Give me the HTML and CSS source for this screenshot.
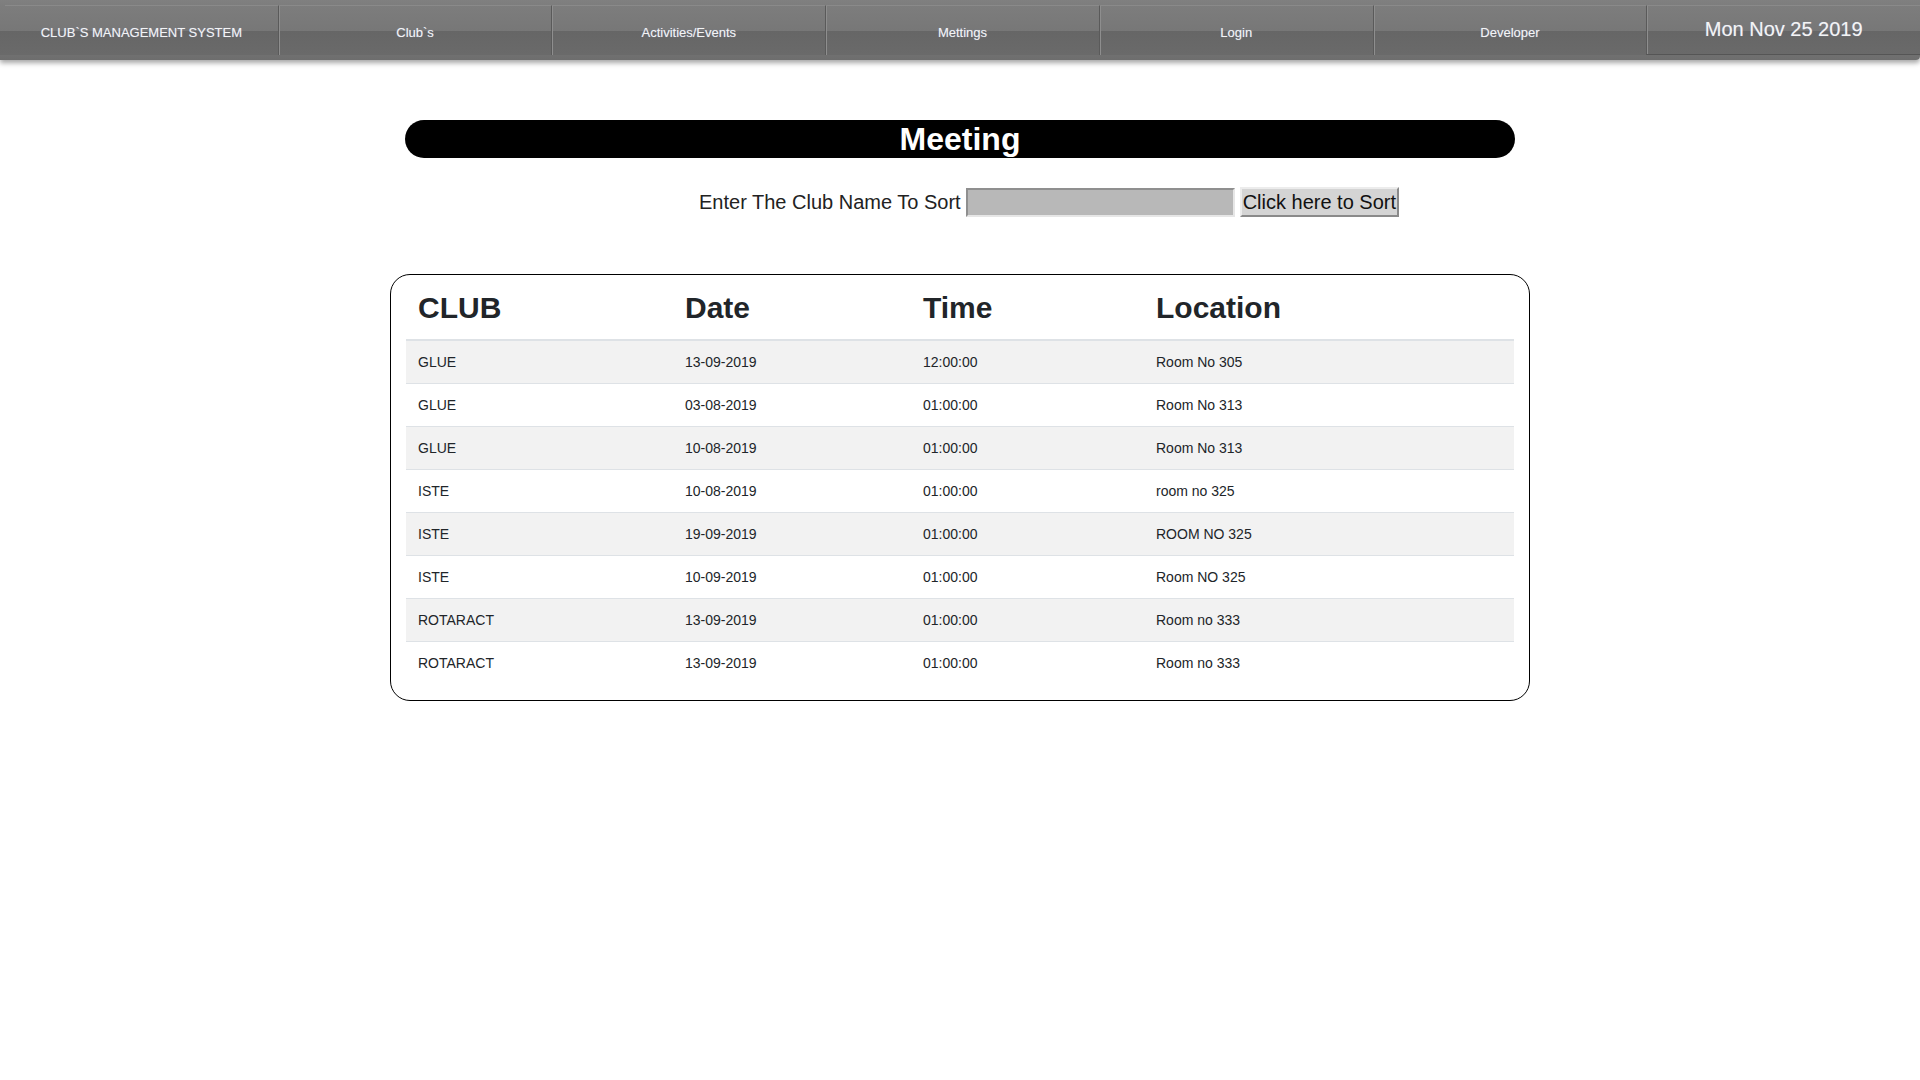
FILE: index.html
```html
<!DOCTYPE html>
<html lang="en">
<head>
<meta charset="utf-8">
<title>Meeting</title>
<link rel="stylesheet" href="styles.css">
</head>
<body>
<nav class="topbar">
  <ul class="menu">
    <li class="menu-item first">CLUB`S MANAGEMENT SYSTEM</li>
    <li class="menu-item">Club`s</li>
    <li class="menu-item">Activities/Events</li>
    <li class="menu-item">Mettings</li>
    <li class="menu-item">Login</li>
    <li class="menu-item">Developer</li>
    <li class="menu-item date">Mon Nov 25 2019</li>
  </ul>
</nav>
<main class="page">
  <div class="wrap">
    <h1 class="title">Meeting</h1>
    <form class="sort">
      <label class="sort-label">Enter The Club Name To Sort</label>
      <input class="sort-input" type="text">
      <button class="sort-btn" type="button">Click here to Sort</button>
    </form>
  </div>
  <div class="card">
    <table class="meetings">
      <colgroup>
        <col class="c1"><col class="c2"><col class="c3"><col class="c4">
      </colgroup>
      <thead>
        <tr><th>CLUB</th><th>Date</th><th>Time</th><th>Location</th></tr>
      </thead>
      <tbody>
        <tr><td>GLUE</td><td>13-09-2019</td><td>12:00:00</td><td>Room No 305</td></tr>
        <tr><td>GLUE</td><td>03-08-2019</td><td>01:00:00</td><td>Room No 313</td></tr>
        <tr><td>GLUE</td><td>10-08-2019</td><td>01:00:00</td><td>Room No 313</td></tr>
        <tr><td>ISTE</td><td>10-08-2019</td><td>01:00:00</td><td>room no 325</td></tr>
        <tr><td>ISTE</td><td>19-09-2019</td><td>01:00:00</td><td>ROOM NO 325</td></tr>
        <tr><td>ISTE</td><td>10-09-2019</td><td>01:00:00</td><td>Room NO 325</td></tr>
        <tr><td>ROTARACT</td><td>13-09-2019</td><td>01:00:00</td><td>Room no 333</td></tr>
        <tr><td>ROTARACT</td><td>13-09-2019</td><td>01:00:00</td><td>Room no 333</td></tr>
      </tbody>
    </table>
  </div>
</main>
</body>
</html>
```
FILE: styles.css
```css
body {
  margin: 0;
  font-family: "Liberation Sans", Arial, sans-serif;
  color: #212529;
  background: #fff;
}

.topbar {
  height: 60px;
  background: linear-gradient(to bottom, #808080 0, #7d7d7d 5px, #777 31px, #666 31px, #6a6a6a 55px, #707070 55px, #6e6e6e 60px);
  box-shadow: 0 3px 5px rgba(0, 0, 0, 0.35);
  border-bottom-right-radius: 4px;
}

.menu {
  display: flex;
  margin: 0;
  padding: 5px 0 0 5px;
  list-style: none;
  height: 50px;
}

.menu-item {
  flex: 1;
  display: flex;
  align-items: center;
  justify-content: center;
  box-sizing: border-box;
  padding-top: 4px;
  font-size: 13px;
  color: #f4f4f4;
  text-shadow: 0 0 1px rgba(180, 200, 255, 0.5);
  border-top: 1px solid #8a8a8a;
  border-left: 1px solid #5a5a5a;
  box-shadow: inset 1px 0 0 #8e8e8e;
}

.menu-item.first {
  border-left: none;
  box-shadow: none;
}

.menu-item.date {
  font-size: 20px;
  padding-top: 0;
  padding-bottom: 2px;
  border-bottom: 1px solid #555;
}

.wrap {
  width: 1110px;
  margin: 60px auto 0;
}

.title {
  margin: 0;
  height: 38px;
  line-height: 38px;
  background: #000;
  color: #fff;
  border-radius: 19px;
  text-align: center;
  font-size: 32px;
  font-weight: bold;
}

.sort {
  display: flex;
  align-items: center;
  margin: 29px 0 0;
  padding-left: 294px;
  height: 30px;
}

.sort-label {
  font-size: 20px;
  color: #222;
}

.sort-input {
  margin: 0 0 0 5px;
  width: 269px;
  height: 29px;
  box-sizing: border-box;
  background: #b8b8b8;
  border: 2px solid;
  border-color: #8f8f8f #e6e6e6 #e6e6e6 #8f8f8f;
  padding: 0 4px;
  font-size: 20px;
  font-family: inherit;
}

.sort-btn {
  margin: 0 0 0 5px;
  height: 30px;
  box-sizing: border-box;
  padding: 0 1px;
  font-family: "Liberation Sans", Arial, sans-serif;
  font-size: 20px;
  color: #111;
  background: #d4d4d4;
  border: 2px solid;
  border-color: #ececec #8a8a8a #8a8a8a #ececec;
}

.card {
  width: 1140px;
  box-sizing: border-box;
  margin: 57px auto 0;
  border: 1px solid #000;
  border-radius: 20px;
  padding: 15px 15px 16px;
}

.meetings {
  width: 100%;
  border-collapse: separate;
  border-spacing: 0;
  table-layout: fixed;
}

.c1 { width: 267px; }
.c2 { width: 238px; }
.c3 { width: 233px; }

.meetings th {
  text-align: left;
  font-size: 30px;
  font-weight: bold;
  line-height: 36px;
  padding: 0 12px 13px;
  border-bottom: 2px solid #dee2e6;
}

.meetings td {
  font-size: 14px;
  line-height: 18px;
  padding: 12px;
  border-bottom: 1px solid #dee2e6;
}

.meetings tbody tr:last-child td {
  border-bottom: none;
}

.meetings tbody tr:nth-child(odd) td {
  background: #f2f2f2;
}
```
